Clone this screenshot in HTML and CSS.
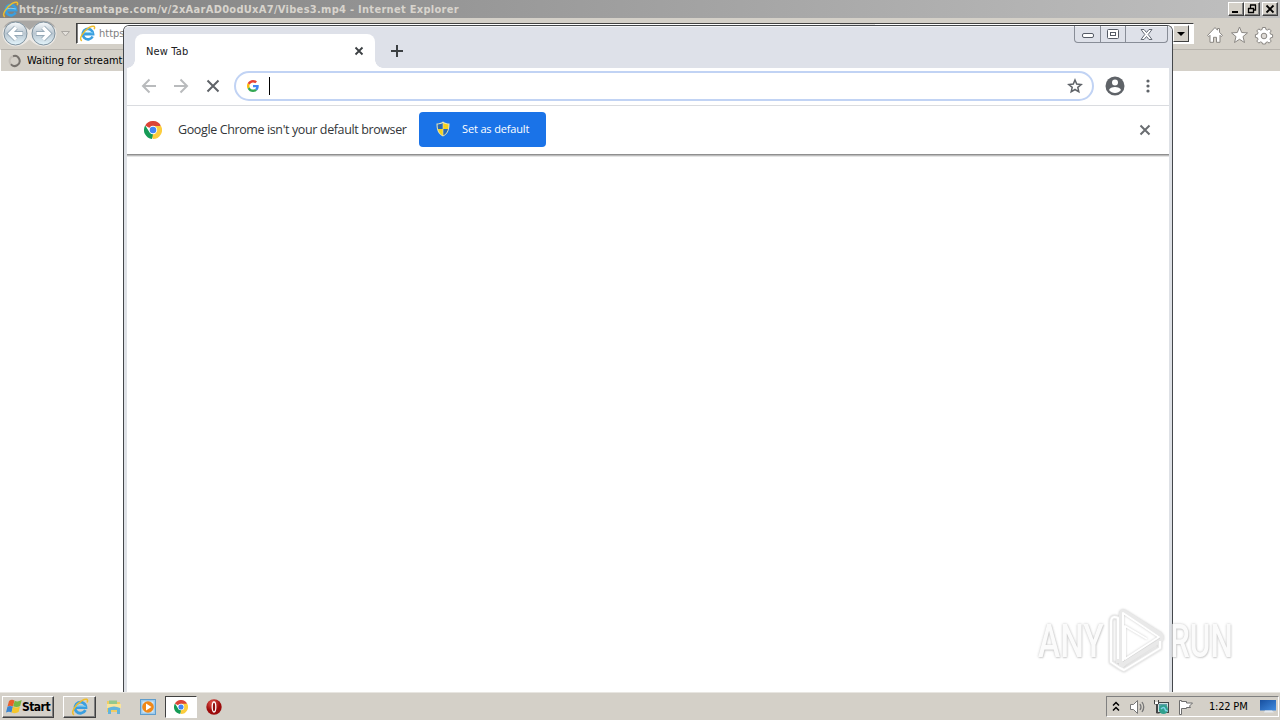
FILE: index.html
```html
<!DOCTYPE html>
<html lang="en">

<head>
  <meta charset="UTF-8">
  <title>Desktop</title>
  <link rel="stylesheet" href="styles.css">
</head>

<body>

  <!-- shared icons -->
  <svg class="defs" width="0" height="0">
    <defs>
      <linearGradient id="blueBall" x1="0" y1="0" x2="0" y2="1">
        <stop offset="0" stop-color="#f8fbfd" />
        <stop offset="0.5" stop-color="#b9c6d0" />
        <stop offset="1" stop-color="#e4f5fc" />
      </linearGradient>
      <linearGradient id="screen" x1="0" y1="0" x2="1" y2="1">
        <stop offset="0" stop-color="#174f9f" />
        <stop offset="1" stop-color="#428ce0" />
      </linearGradient>
      <radialGradient id="redBall" cx="0.4" cy="0.25">
        <stop offset="0" stop-color="#e65a50" />
        <stop offset="1" stop-color="#9c0b0b" />
      </radialGradient>
    </defs>
    <symbol id="ie" viewBox="0 0 16 16">
      <path d="M12.800 10.800A4.900 4.900 0 1 1 13.300 8.600H4.500" fill="none" stroke="#3a9fe0" stroke-width="2.500" />
      <path d="M4 7.500q4-1.500 9 0" fill="none" stroke="#7fd0f5" />
      <path d="M2.800 14.800C-.8 14 3.500 6 9.700 2.300c3.500-2 6-1.600 4.600 1.700" fill="none" stroke="#efbd2c" stroke-width="1.400" />
    </symbol>
    <symbol id="chrome" viewBox="0 0 18 18">
      <path d="M9 9L1.200 4.500A9 9 0 0 1 16.800 4.500z" fill="#dc4437" />
      <path d="M9 9l7.800-4.500A9 9 0 0 1 9 18z" fill="#fccd3d" />
      <path d="M9 4.900h8L13 11 9 18l-3-6.500z" fill="#fccd3d" />
      <path d="M1.200 4.500L5.400 11 9 13.100 8 18A9 9 0 0 1 1.200 4.500z" fill="#159b56" />
      <circle cx="9" cy="9" r="4.200" fill="#fff" />
      <circle cx="9" cy="9" r="3.300" fill="#4285f4" />
    </symbol>
  </svg>

  <div class="desktop">

    <div class="ie">
      <div class="ie-title">
        <svg width="17" height="17"><use href="#ie" /></svg>
        <span class="ie-name">https://streamtape.com/v/2xAarAD0odUxA7/Vibes3.mp4 - Internet Explorer</span>
        <div class="ie-buttons">
          <i><svg width="14" height="12"><path d="M3 9h6" stroke="#000" stroke-width="2" /></svg></i>
          <i><svg width="14" height="12"><path d="M5 2h6M5.500 2v3M10.500 2v5H9M3 5.500h6M3.500 5v5M8.500 5v5M3 9.500h6" fill="none" stroke="#000" stroke-width="1.300" /></svg></i>
          <i class="gap"><svg width="14" height="12"><path d="M3.500 2.500l7 7M10.500 2.500l-7 7" stroke="#000" stroke-width="1.800" /></svg></i>
        </div>
      </div>

      <div class="ie-toolbar">
        <svg class="nav" width="72" height="31" viewBox="0 0 72 31">
          <path d="M2.500 15.500a13 13 0 0 1 13-13q7 0 14 4q7-4 14-4a13 13 0 0 1 13 13a13 13 0 0 1-13 13q-7 0-14-7q-7 7-14 7a13 13 0 0 1-13-13z" fill="#ece9e5" />
          <path d="M3.500 10Q7 2.500 15.500 2.500h28Q52 2.500 55.500 10l-6-4H37l-7.500 6L22 6H10z" fill="#aaa8a5" />
          <circle cx="15.500" cy="15.500" r="11.500" fill="url(#blueBall)" stroke="#7f929f" />
          <circle cx="43.500" cy="15.500" r="11.500" fill="url(#blueBall)" stroke="#7f929f" />
          <path d="M23 15.500H10m6-6l-6 6 6 6M36 15.500h13m-6-6l6 6-6 6" fill="none" stroke="#96a9b7" stroke-width="5" />
          <path d="M22.500 15.500H10m6-6l-6 6 6 6M36.500 15.500h13m-6.500-6l6 6-6 6" fill="none" stroke="#fff" stroke-width="3.200" />
          <path d="M61.500 13.500h8l-4 4.500z" fill="#e4e1dc" stroke="#aaa7a2" />
        </svg>
        <div class="address">
          <svg width="17" height="17"><use href="#ie" /></svg>
          <span>https://</span>
          <b></b>
          <i class="drop"><svg width="14" height="16"><path d="M3 6h8l-4 4z" fill="#000" /></svg></i>
        </div>
        <svg class="tools" width="68" height="20" viewBox="0 0 68 20">
          <g fill="#fff" stroke="#8a8783">
            <path d="M1.500 10.500L9 2.500l2.500 2.700V3.500h2v3.800l3 3.200-1.300 1-1.200-1.200v7h-3.500v-5h-3v5H4v-7l-1.200 1.200z" />
            <path d="M33.500 2l2.200 5.500 5.800.4-4.500 3.700 1.500 5.900-5-3.200-5 3.200 1.500-5.900-4.500-3.700 5.800-.4z" />
            <path d="M56.500 2.500h3l.4 2 1.500.6 1.800-1.200 2 2-1.200 1.800.6 1.500 2 .4v2.800l-2 .4-.6 1.500 1.200 1.800-2 2-1.800-1.200-1.500.6-.4 1.500h-3l-.4-1.500-1.500-.6-1.800 1.200-2-2 1.200-1.800-.6-1.500-2-.4V9.600l2-.4.6-1.500-1.200-1.800 2-2 1.800 1.200 1.500-.6z" />
            <circle cx="58" cy="11" r="2.800" fill="#dedad5" />
          </g>
        </svg>
      </div>

      <div class="ie-tabs">
        <svg width="14" height="14"><path d="M5 2.200a5 5 0 1 1-2.200 8" fill="none" stroke="#77736e" stroke-width="2" /><path d="M2.800 10.200A5 5 0 0 1 5 2.200" fill="none" stroke="#c3beb7" stroke-width="2" /></svg>
        <span>Waiting for streamta</span>
      </div>
    </div>

    <div class="chrome">
      <div class="chrome-top">
        <div class="tab">
          <span>New Tab</span>
          <svg width="10" height="10"><path d="M1.500 1.500l7 7M8.500 1.500l-7 7" stroke="#3c4043" stroke-width="1.800" /></svg>
        </div>
        <svg class="plus" width="12" height="12"><path d="M6 0v12M0 6h12" stroke="#3c4043" stroke-width="2" /></svg>
        <div class="caption">
          <i><svg class="min" width="12" height="6"><rect x=".5" y=".5" width="11" height="4" rx="1.500" fill="#fff" stroke="#555b66" /></svg></i>
          <i><svg width="12" height="10"><rect x=".5" y=".5" width="11" height="9" rx="1" fill="#fff" stroke="#555b66" /><rect x="3.500" y="3.500" width="5" height="3" fill="#fff" stroke="#555b66" /></svg></i>
          <i><svg width="13" height="11"><path d="M1 .5h3l2.500 3 2.500-3h3L8.200 5.500l3.800 5H9l-2.500-3-2.500 3H1l3.800-5z" fill="#fff" stroke="#656b75" /></svg></i>
        </div>
      </div>

      <div class="chrome-toolbar">
        <svg width="16" height="16"><path d="M15 8H2m6.500-6.500L2 8l6.500 6.500" fill="none" stroke="#b9bbbd" stroke-width="2" /></svg>
        <svg width="16" height="16"><path d="M1 8h13M7.500 1.500L14 8l-6.500 6.500" fill="none" stroke="#b9bbbd" stroke-width="2" /></svg>
        <svg width="16" height="16"><path d="M2.500 2.500l11 11M13.500 2.500l-11 11" stroke="#5f6368" stroke-width="2" /></svg>
        <div class="omnibox">
          <svg width="12" height="12" viewBox="0 0 48 48">
            <path fill="#ea4335" d="M24 9.500c3.540 0 6.710 1.220 9.210 3.600l6.850-6.850C35.900 2.380 30.470 0 24 0 14.620 0 6.510 5.380 2.560 13.220l7.980 6.190C12.430 13.720 17.740 9.500 24 9.500z" />
            <path fill="#4285f4" d="M46.980 24.550c0-1.570-.15-3.090-.38-4.550H24v9.020h12.940c-.58 2.960-2.260 5.480-4.780 7.180l7.730 6c4.510-4.180 7.090-10.360 7.090-17.650z" />
            <path fill="#fbbc05" d="M10.530 28.590A14.500 14.500 0 0 1 9.770 24c0-1.600.27-3.140.76-4.590l-7.980-6.190A23.900 23.900 0 0 0 0 24c0 3.880.92 7.540 2.560 10.780z" />
            <path fill="#34a853" d="M24 48c6.480 0 11.930-2.130 15.890-5.810l-7.730-6c-2.150 1.450-4.920 2.300-8.160 2.300-6.260 0-11.570-4.220-13.470-9.910l-7.980 6.190C6.510 42.620 14.620 48 24 48z" />
          </svg>
          <b class="caret"></b>
          <svg class="star" width="16" height="16"><path d="M8 2l1.700 4.100 4.500.4-3.400 2.900 1 4.400L8 11.500l-3.800 2.300 1-4.400-3.400-2.900 4.500-.4z" fill="none" stroke="#5f6368" stroke-width="1.500" /></svg>
        </div>
        <svg class="user" width="20" height="20">
          <circle cx="10" cy="10" r="9.500" fill="#5f6368" />
          <circle cx="10" cy="6.500" r="3" fill="#fff" />
          <path d="M4 14c1-4 11-4 12 0-3 4-9 4-12 0z" fill="#fff" />
        </svg>
        <svg class="dots" width="4" height="14" fill="#5f6368"><circle cx="2" cy="2" r="1.600" /><circle cx="2" cy="7" r="1.600" /><circle cx="2" cy="12" r="1.600" /></svg>
      </div>

      <div class="infobar">
        <svg width="18" height="18"><use href="#chrome" /></svg>
        <span class="info-text">Google Chrome isn't your default browser</span>
        <button>
          <svg width="14" height="16" viewBox="0 0 14 16">
            <path d="M7 .5c2 1.500 4 2 6.500 2C13.500 9 12 13 7 15.500 2 13 .5 9 .5 2.500 3 2.500 5 2 7 .5z" fill="#e9e5b5" />
            <path d="M6.700 2v6H2c-.3-1.500-.4-3-.4-4.600C3.500 3.300 5 3 6.700 2zM7.300 8H12c-.6 3-2 4.900-4.700 6.400z" fill="#2869b5" />
            <path d="M7.300 2C9 3 10.500 3.300 12.400 3.400c0 1.600-.1 3.100-.4 4.600H7.300zM6.700 8v6.400C4 12.900 2.600 11 2 8z" fill="#f5d21f" />
          </svg>
          <span>Set as default</span>
        </button>
        <svg class="close" width="12" height="12"><path d="M1.500 1.500l9 9M10.500 1.500l-9 9" stroke="#6a6d71" stroke-width="2" /></svg>
      </div>
    </div>

    <div class="watermark">
      <span>ANY</span>
      <svg width="58" height="64" viewBox="0 0 58 64" fill="none" stroke-linejoin="round">
        <path d="M11 54V9q-7-3-7 4v40l9 6 4 2 36-22v-7M14 58V5q0-4 4-2l35 22q4 4 0 7L18 54z" stroke="#e4e4e4" stroke-width="4" />
        <path d="M11 50V9q-7-3-7 4v40l9 6 4 2 36-22v-7M16 52V4l36 24-34 22V17l22 13" stroke="#fff" stroke-width="2" />
      </svg>
      <span class="run">RUN</span>
    </div>

    <div class="taskbar">
      <div class="start">
        <svg width="17" height="16" viewBox="0 0 17 16">
          <path d="M3 2c2-1.500 3.500-1.500 5.500-.5L7 7.500C5 6.500 3.500 6.500 1.500 7.500z" fill="#e8602c" />
          <path d="M8.700 1.700c2 1 4 1 7-.7L14.200 7c-2 1.200-4.500 1.500-7 .3z" fill="#76b843" />
          <path d="M1.400 7.700c1.800-1 3.500-1 5.500 0L5.500 13.500c-1.600-1-3.300-1-5.500 0z" fill="#3b85d1" />
          <path d="M7 7.700c2 1 4.500 1 7-.3L12.600 13c-2 1.300-4.500 1.500-7 .5z" fill="#f5c72c" />
        </svg>
        <span>Start</span>
      </div>
      <div class="task raised"><svg width="18" height="18"><use href="#ie" /></svg></div>
      <div class="task">
        <svg width="16" height="16">
          <path d="M1 2h6l1 1h6v10H1z" fill="#f0cc63" />
          <path d="M3 1.500h8V7H3z" fill="#94c88c" />
          <path d="M1 5h14v4H1z" fill="#f8e49b" />
          <path d="M2 15V9q6-3 12 0v6h-3v-4H5v4z" fill="#63b4dc" />
        </svg>
      </div>
      <div class="task">
        <svg width="16" height="16">
          <rect x=".5" y=".5" width="15" height="15" fill="#9dcaec" stroke="#5f9dcc" />
          <rect x="2.500" y="2.500" width="11" height="11" fill="#d5e9f5" />
          <circle cx="8" cy="8" r="5.800" fill="#f08818" />
          <path d="M6 4.500v7L11.500 8z" fill="#fff" />
        </svg>
      </div>
      <div class="task sunken"><svg width="14" height="14"><use href="#chrome" /></svg></div>
      <div class="task">
        <svg width="16" height="16"><circle cx="8" cy="8" r="7.700" fill="url(#redBall)" /><ellipse cx="8" cy="8" rx="1.800" ry="5" fill="#911010" stroke="#fff" stroke-width="1.300" /></svg>
      </div>
      <div class="tray">
        <svg width="8" height="12"><path d="M1 4.500l3-3 3 3M1 9.500l3-3 3 3" fill="none" stroke="#000" stroke-width="1.500" /></svg>
        <svg class="vol" width="18" height="16"><path d="M1.500 5.500h3l4-4v13l-4-4h-3z" fill="#fff" stroke="#777" /><path d="M11 5q2 3 0 6M13 3q3.500 5 0 10" fill="none" stroke="#777" stroke-width="1.300" /></svg>
        <svg class="net" width="17" height="16"><rect x="4.500" y="3.500" width="11" height="10" fill="#cfe1df" stroke="#42474a" /><rect x="6" y="5" width="8" height="7" fill="#569fa8" /><circle cx="10.500" cy="10.500" r="4.500" fill="#30a18d" /><path d="M8 10q3-3 4 0t2 1" fill="none" stroke="#80d1ea" stroke-width="1.500" /><path d="M1.500 1v4h4V1M3.500 5v9h3" fill="none" stroke="#444" /><path d="M2 3h3v2H2z" fill="#fff" /></svg>
        <svg class="flag" width="17" height="16"><path d="M2.500 15.500v-14h2v1h5v1.500h6l-3 3 1 1.500h-4v1h-5v6z" fill="#fff" stroke="#6d6d6d" /></svg>
        <span class="clock">1:22 PM</span>
        <svg class="desk" width="16" height="14"><rect width="16" height="10.500" fill="url(#screen)" /><path d="M5 10.500h7l2 2H4z" fill="#e4eaf0" /></svg>
      </div>
    </div>

  </div>

</body>

</html>
```
FILE: styles.css
```css
* {
  box-sizing: border-box;
}

body {
  margin: 0;
  overflow: hidden;
  font-family: "DejaVu Sans Condensed", "DejaVu Sans", sans-serif;
  font-size: 11px;
  color: #000;
}

svg {
  display: block;
  flex-shrink: 0;
}

i {
  display: flex;
  align-items: center;
  justify-content: center;
}

.defs {
  position: absolute;
}

.desktop {
  position: relative;
  width: 1280px;
  height: 720px;
  background: #fff;
  display: flex;
  flex-direction: column;
}

/* Internet Explorer */
.ie {
  flex: 1;
}

.ie-title {
  height: 18px;
  display: flex;
  align-items: center;
  padding-left: 2px;
  background: linear-gradient(90deg, #808080, #c0c0c0);
}

.ie-name {
  color: #d8d4cd;
  font-weight: bold;
  letter-spacing: 0.29px;
  white-space: nowrap;
}

.ie-buttons {
  display: flex;
  margin-left: auto;
  padding-right: 2px;
}

.ie-buttons i {
  width: 16px;
  height: 14px;
  background: #d4d0c8;
  border: 1px solid;
  border-color: #fff #404040 #404040 #fff;
  box-shadow: inset -1px -1px #808080;
}

.ie-buttons .gap {
  margin-left: 2px;
}

.ie-toolbar {
  height: 31px;
  display: flex;
  align-items: center;
  background: #d4d0c8;
}

.address {
  position: relative;
  width: 1118px;
  height: 21px;
  margin-left: 4px;
  display: flex;
  align-items: center;
  padding-left: 2px;
  overflow: hidden;
  background: #fff;
  border: 1px solid;
  border-color: #404040 #fff #fff #404040;
  box-shadow: inset 1px 0 #808080;
}

.address span {
  width: 25px;
  margin-left: 3px;
  overflow: hidden;
  color: #808080;
}

.address b {
  position: absolute;
  left: 763px;
  top: -1px;
  width: 35px;
  height: 5px;
  background: #e6e5e3;
}

.drop {
  width: 16px;
  height: 17px;
  margin-left: auto;
  margin-right: 4px;
  background: #d4d0c8;
  border: 1px solid;
  border-color: #fff #404040 #404040 #fff;
}

.tools {
  margin: 3px 0 0 12px;
}

.ie-tabs {
  height: 22px;
  display: flex;
  align-items: center;
  padding-left: 7px;
  background: #d4d0c8;
  border-top: 1px solid #b8b4ad;
  border-left: 1px solid #fff;
}

.ie-tabs span {
  width: 96px;
  margin-left: 5px;
  overflow: hidden;
  white-space: nowrap;
}

/* Chrome */
.chrome {
  position: absolute;
  left: 123px;
  top: 25px;
  width: 1050px;
  height: 667px;
  padding: 0 3px;
  background: #fff;
  border: 1px solid #44474b;
  border-bottom: 0;
  border-radius: 6px 6px 0 0;
  box-shadow: inset 3px 0 #dee1e6, inset -3px 0 #dee1e6;
}

.chrome-top {
  height: 42px;
  margin: 0 -3px;
  padding: 8px 4px 0 11px;
  display: flex;
  background: #dee1e9;
  border-top: 1px solid #f5f6f8;
  border-radius: 5px 5px 0 0;
}

.tab {
  position: relative;
  width: 240px;
  height: 34px;
  margin-top: -1px;
  padding: 0 11px;
  display: flex;
  align-items: center;
  justify-content: space-between;
  background: #fff;
  border-radius: 8px 8px 0 0;
  color: #202124;
  letter-spacing: 0.15px;
}

.tab::before,
.tab::after {
  content: "";
  position: absolute;
  bottom: 0;
  width: 8px;
  height: 8px;
  background: radial-gradient(circle at 0 0, transparent 7.500px, #fff 8px);
}

.tab::before {
  left: -8px;
}

.tab::after {
  right: -8px;
  transform: scaleX(-1);
}

.plus {
  margin: 10px 0 0 16px;
}

.caption {
  display: flex;
  height: 17px;
  margin: -9px 0 0 auto;
  border: 1px solid #888d97;
  border-top: 0;
  border-radius: 0 0 4px 4px;
}

.caption i {
  width: 25px;
}

.caption .min {
  margin-top: 4px;
}

.caption i + i {
  border-left: 1px solid #888d97;
}

.caption i:last-child {
  width: 42px;
}

.chrome-toolbar {
  height: 38px;
  display: flex;
  align-items: center;
  padding: 0 0 1px 14px;
  gap: 16px;
  border-bottom: 1px solid #dadce0;
}

.omnibox {
  width: 860px;
  height: 30px;
  margin-left: -3px;
  padding: 0 9px 0 11px;
  display: flex;
  align-items: center;
  border: 2px solid #c1d3f4;
  border-radius: 15px;
}

.caret {
  width: 1px;
  height: 18px;
  margin-left: 10px;
  background: #000;
}

.star {
  margin-left: auto;
}

.user {
  margin-left: -5px;
}

.dots {
  margin-left: 4.500px;
  margin-right: -20px;
}

.infobar {
  height: 48px;
  display: flex;
  align-items: center;
  padding: 0 18px 0 17px;
  box-shadow: 0 1px #8f8f8f, 0 2px #bcbcbc, 0 3px #e5e5e5;
}

.info-text {
  width: 229px;
  margin: -2px 0 0 16px;
  font-family: "Open Sans", sans-serif;
  font-size: 12.500px;
  letter-spacing: -0.38px;
  color: #333639;
  white-space: nowrap;
}

.infobar button {
  width: 127px;
  height: 35px;
  margin: -2px 0 0 12px;
  padding: 0 0 0 17px;
  display: flex;
  align-items: center;
  gap: 12px;
  background: #1a73e8;
  border: 0;
  border-radius: 4px;
  color: #fff;
  font-family: "Open Sans", sans-serif;
  font-size: 11px;
  letter-spacing: -0.15px;
  white-space: nowrap;
}

.infobar button span {
  margin-top: -2px;
}

.close {
  margin-left: auto;
}

/* watermark */
.watermark {
  position: absolute;
  left: 1038px;
  top: 609px;
  height: 64px;
  display: flex;
  align-items: center;
  opacity: 0.8;
}

.watermark span {
  width: 66px;
  font-family: Roboto, sans-serif;
  font-size: 47px;
  font-weight: 500;
  line-height: 64px;
  color: #fbfbfb;
  text-shadow: 0 0 3px #b4b4b4, 1px 1px 2px #ccc;
  transform: scaleX(0.71);
  transform-origin: 0 50%;
}

.watermark svg {
  margin-left: 3px;
  filter: drop-shadow(0 0 1px #bbb);
}

.watermark .run {
  margin-left: 5px;
  transform: scaleX(0.67);
}

/* taskbar */
.taskbar {
  position: relative;
  height: 28px;
  display: flex;
  align-items: center;
  padding: 0 1px 0 2px;
  background: #d4d0c8;
  border-top: 1px solid #e8e6e1;
}

.start,
.task {
  height: 22px;
  display: flex;
  align-items: center;
  justify-content: center;
}

.start,
.raised {
  border: 1px solid;
  border-color: #fff #404040 #404040 #fff;
  box-shadow: inset -1px -1px #808080;
}

.start {
  width: 52px;
  margin-right: 9px;
  font-weight: bold;
  font-size: 12px;
  letter-spacing: -0.5px;
}

.start span {
  margin-left: -1px;
}

.task {
  width: 34px;
}

.raised {
  width: 33px;
  margin-right: 1px;
}

.sunken {
  width: 32px;
  background: #fff;
  border: 1px solid;
  border-color: #404040 #fff #fff #404040;
}

.tray {
  width: 173px;
  height: 21px;
  margin-left: auto;
  padding-left: 5px;
  display: flex;
  align-items: center;
  border: 1px solid;
  border-color: #808080 #fff #fff #808080;
}

.vol {
  margin-left: 9px;
}

.net {
  margin-left: 6px;
}

.flag {
  margin-left: 7px;
}

.clock {
  width: 40px;
  margin-left: 15px;
  letter-spacing: -0.2px;
  white-space: nowrap;
}

.desk {
  margin-left: 11px;
}
```
